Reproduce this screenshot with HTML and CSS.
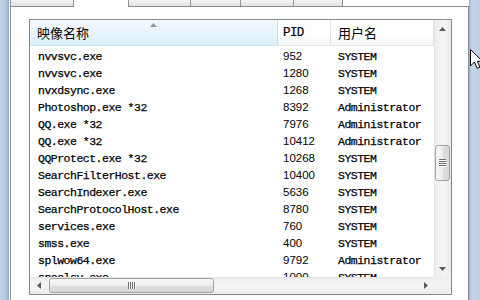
FILE: index.html
```html
<!DOCTYPE html>
<html lang="zh-CN">
<head>
    <meta charset="UTF-8">
    <meta name="viewport" content="width=device-width, initial-scale=1.0">
    <title>Windows 任务管理器</title>
    <link rel="stylesheet" href="styles.css">
</head>
<body>
    <div class="window">
        <div class="frame-left"></div>
        <div class="client">
            <!-- tab strip: only the bottom edge of the tabs is in view -->
            <div class="tabs">
                <div class="tab t1"></div>
                <div class="tab t2 active"></div>
                <div class="tab t3"></div>
                <div class="tab t4"></div>
                <div class="tab t5"></div>
                <div class="tab t6"></div>
            </div>
            <div class="pane">
                <div class="listview">
                    <div class="list-main">
                        <div class="header">
                            <div class="col c1 cjk sorted">映像名称
                                <svg class="sort-arrow" width="7" height="4" viewBox="0 0 7 4"><polygon points="0,4 3.5,0 7,4" fill="#8d969e"/></svg>
                            </div>
                            <div class="col c2">PID</div>
                            <div class="col c3 cjk">用户名</div>
                        </div>
                        <div class="rows">
                            <div class="row"><span class="c1">nvvsvc.exe</span><span class="c2">952</span><span class="c3">SYSTEM</span></div>
                            <div class="row"><span class="c1">nvvsvc.exe</span><span class="c2">1280</span><span class="c3">SYSTEM</span></div>
                            <div class="row"><span class="c1">nvxdsync.exe</span><span class="c2">1268</span><span class="c3">SYSTEM</span></div>
                            <div class="row"><span class="c1">Photoshop.exe *32</span><span class="c2">8392</span><span class="c3">Administrator</span></div>
                            <div class="row"><span class="c1">QQ.exe *32</span><span class="c2">7976</span><span class="c3">Administrator</span></div>
                            <div class="row"><span class="c1">QQ.exe *32</span><span class="c2">10412</span><span class="c3">Administrator</span></div>
                            <div class="row"><span class="c1">QQProtect.exe *32</span><span class="c2">10268</span><span class="c3">SYSTEM</span></div>
                            <div class="row"><span class="c1">SearchFilterHost.exe</span><span class="c2">10400</span><span class="c3">SYSTEM</span></div>
                            <div class="row"><span class="c1">SearchIndexer.exe</span><span class="c2">5636</span><span class="c3">SYSTEM</span></div>
                            <div class="row"><span class="c1">SearchProtocolHost.exe</span><span class="c2">8780</span><span class="c3">SYSTEM</span></div>
                            <div class="row"><span class="c1">services.exe</span><span class="c2">760</span><span class="c3">SYSTEM</span></div>
                            <div class="row"><span class="c1">smss.exe</span><span class="c2">400</span><span class="c3">SYSTEM</span></div>
                            <div class="row"><span class="c1">splwow64.exe</span><span class="c2">9792</span><span class="c3">Administrator</span></div>
                            <div class="row"><span class="c1">spoolsv.exe</span><span class="c2">1000</span><span class="c3">SYSTEM</span></div>
                        </div>
                    </div>
                    <div class="vscroll">
                        <div class="sb-btn"><svg width="7" height="4" viewBox="0 0 7 4"><polygon points="0,4 3.5,0 7,4" fill="#5a5a5a"/></svg></div>
                        <div class="vtrack">
                            <div class="thumb vthumb"><div class="grip-v"></div></div>
                        </div>
                        <div class="sb-btn"><svg width="7" height="4" viewBox="0 0 7 4"><polygon points="0,0 3.5,4 7,0" fill="#5a5a5a"/></svg></div>
                    </div>
                    <div class="hscroll">
                        <div class="sb-btn"><svg width="4" height="7" viewBox="0 0 4 7"><polygon points="4,0 0,3.5 4,7" fill="#5a5a5a"/></svg></div>
                        <div class="htrack">
                            <div class="thumb hthumb"><div class="grip-h"></div></div>
                        </div>
                        <div class="sb-btn"><svg width="4" height="7" viewBox="0 0 4 7"><polygon points="0,0 4,3.5 0,7" fill="#5a5a5a"/></svg></div>
                    </div>
                    <div class="corner"></div>
                </div>
            </div>
        </div>
        <div class="frame-right"></div>
    </div>
    <svg class="cursor" width="13" height="21" viewBox="0 0 13 21">
        <path d="M0.5 0.5 V17 L4.5 13 L7.2 19.3 L9.9 18.1 L7.3 12.3 H12.5 Z" fill="#fff" stroke="#000" stroke-width="1"/>
    </svg>
</body>
</html>
```

FILE: styles.css
```css
* {
    box-sizing: border-box;
}
body {
    margin: 0;
    width: 480px;
    height: 300px;
    overflow: hidden;
    position: relative;
    background: #fff;
    color: #000;
    font-family: "Liberation Mono", "Noto Sans CJK SC", monospace;
}
.window {
    display: flex;
    height: 300px;
}
.frame-left {
    width: 9px;
    background: linear-gradient(to right, #c3d3e6, #b3c7de 70%, #91a7c2);
}
.frame-right {
    width: 11px;
    background: linear-gradient(to right, #98aec9, #c2d4e9 25%, #bdd0e6);
}
.client {
    flex: 1;
    display: flex;
    flex-direction: column;
    padding-left: 1px;
    background: #fff;
}

/* tab strip */
.tabs {
    display: flex;
    height: 6px;
}
.tab {
    height: 6px;
    border-right: 1px solid #8e9299;
    background: linear-gradient(#f3f3f3, #e2e2e2);
}
.tab.t1 { width: 64px; border-left: 1px solid #8e9299; }
.tab.t2 { width: 55px; }
.tab.t3 { width: 62px; }
.tab.t4 { width: 50px; }
.tab.t5 { width: 53px; }
.tab.t6 { width: 49px; }
.tab.active {
    height: 7px;
    background: #fff;
    position: relative;
    z-index: 1;
}
.pane {
    flex: 1;
    border: 1px solid #898c95;
    border-bottom: none;
    padding: 12px 16px 0 18px;
}

/* list view */
.listview {
    width: 423px;
    height: 276px;
    border: 1px solid #828790;
    display: grid;
    grid-template-columns: 404px 17px;
    grid-template-rows: 257px 17px;
}
.list-main {
    display: flex;
    flex-direction: column;
    overflow: hidden;
}
.header {
    display: flex;
    flex: none;
    height: 26px;
}
.col {
    height: 26px;
    display: flex;
    align-items: center;
    font-size: 12.5px;
    letter-spacing: -0.6px;
    -webkit-text-stroke: 0.2px #000;
    border-right: 1px solid #e2e6eb;
    border-bottom: 1px solid #e6eaee;
    background: linear-gradient(#fff, #fff 50%, #f5f6f8);
}
.col.cjk {
    font-family: "Noto Sans CJK SC", sans-serif;
    font-size: 13px;
    letter-spacing: 0;
    -webkit-text-stroke: 0;
}
.col.c1 { width: 248px; padding-left: 7px; }
.col.c2 { width: 53px; padding-left: 5px; }
.col.c3 { width: 103px; padding-left: 7px; }
.col.sorted {
    position: relative;
    background: linear-gradient(#f3f9fd, #e8f5fc 50%, #dbeff9);
    border-right-color: #c5dff1;
    border-bottom-color: #d3e8f5;
}
.sort-arrow {
    position: absolute;
    top: 3px;
    left: 120px;
}
.rows {
    flex: 1;
    overflow: hidden;
    padding-top: 2px;
    font-size: 11.5px;
    letter-spacing: -0.5px;
    -webkit-text-stroke: 0.25px #000;
}
.row {
    display: flex;
    height: 17px;
    line-height: 17px;
    white-space: nowrap;
}
.row .c1 { width: 248px; padding-left: 8px; }
.row .c2 {
    width: 53px;
    padding-left: 5px;
    font-family: "Liberation Sans", sans-serif;
    letter-spacing: 0;
    -webkit-text-stroke: 0;
}
.row .c3 { width: 103px; padding-left: 7px; }

/* scroll bars */
.vscroll {
    display: flex;
    flex-direction: column;
    background: linear-gradient(to right, #e2e2e2, #efefef 2px, #f4f4f4 60%, #ebebeb);
}
.hscroll {
    display: flex;
    background: linear-gradient(#e2e2e2, #efefef 2px, #f4f4f4 60%, #ebebeb);
}
.sb-btn {
    flex: none;
    width: 17px;
    height: 17px;
    display: flex;
    align-items: center;
    justify-content: center;
}
.vtrack {
    flex: 1;
    padding: 0 1px;
}
.htrack {
    flex: 1;
    padding: 1px 0;
}
.thumb {
    display: flex;
    align-items: center;
    justify-content: center;
    border: 1px solid #a2a2a2;
    border-radius: 3px;
}
.vthumb {
    margin-top: 108px;
    height: 36px;
    background: linear-gradient(to right, #f7f7f7, #ececec 50%, #dedede 51%, #d6d6d6);
}
.hthumb {
    margin-left: 2px;
    width: 165px;
    height: 15px;
    background: linear-gradient(#f7f7f7, #ececec 50%, #dedede 51%, #d6d6d6);
}
.grip-v {
    width: 7px;
    height: 8px;
    background: repeating-linear-gradient(#707070 0 1px, #fbfbfb 1px 2px);
}
.grip-h {
    width: 8px;
    height: 7px;
    background: repeating-linear-gradient(to right, #707070 0 1px, #fbfbfb 1px 2px);
}
.corner {
    background: #f0f0f0;
}
.cursor {
    position: absolute;
    left: 470px;
    top: 49px;
}
```
